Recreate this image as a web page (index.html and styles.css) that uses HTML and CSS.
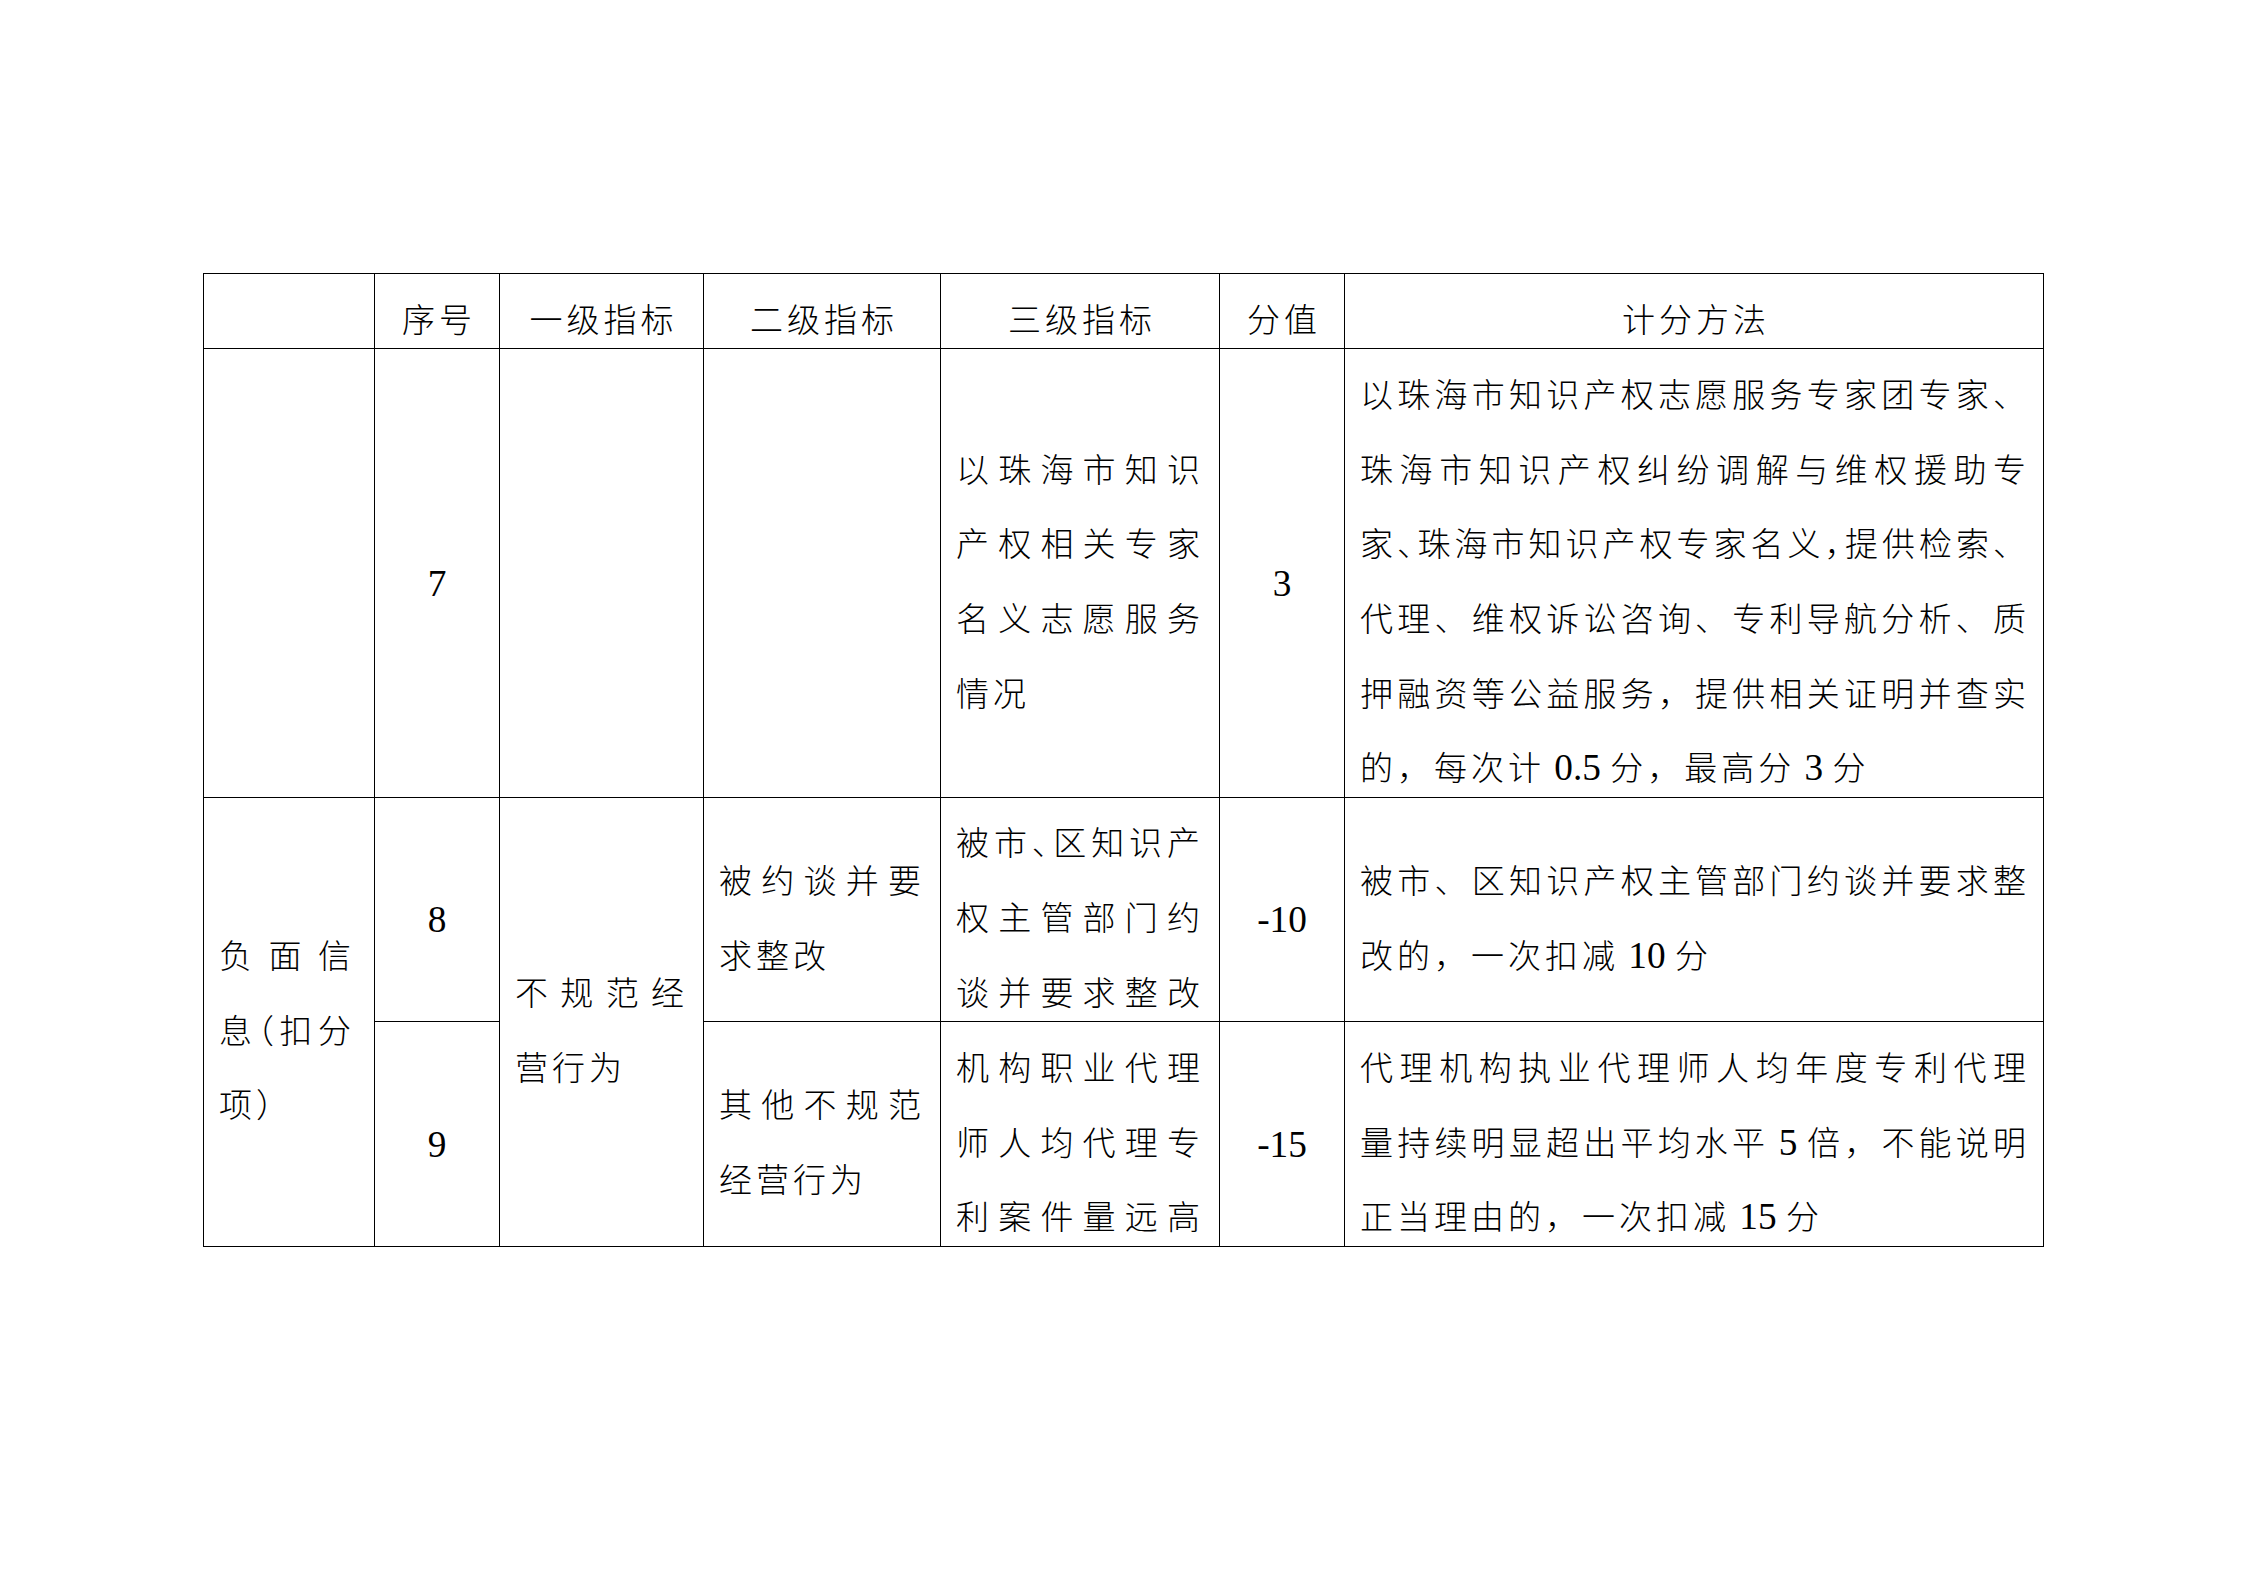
FILE: index.html
```html
<!DOCTYPE html>
<html lang="zh-CN">
<head>
<meta charset="utf-8">
<title>评分表</title>
<link rel="stylesheet" href="styles.css">
</head>
<body>
<div class="sheet">
  <div class="tbl">
    <!-- header -->
    <div class="c"></div>
    <div class="c ctr"><div class="t"><div class="l">序号</div></div></div>
    <div class="c ctr"><div class="t"><div class="l">一级指标</div></div></div>
    <div class="c ctr"><div class="t"><div class="l">二级指标</div></div></div>
    <div class="c ctr"><div class="t"><div class="l">三级指标</div></div></div>
    <div class="c ctr"><div class="t"><div class="l">分值</div></div></div>
    <div class="c ctr"><div class="t"><div class="l">计分方法</div></div></div>

    <!-- row 7 -->
    <div class="c"></div>
    <div class="c ctr num"><div class="t"><div class="l">7</div></div></div>
    <div class="c"></div>
    <div class="c"></div>
    <div class="c txt"><div class="t">
      <div class="l j">以珠海市知识</div>
      <div class="l j">产权相关专家</div>
      <div class="l j">名义志愿服务</div>
      <div class="l">情况</div>
    </div></div>
    <div class="c ctr num"><div class="t"><div class="l">3</div></div></div>
    <div class="c txt wide"><div class="t">
      <div class="l j">以珠海市知识产权志愿服务专家团专家、</div>
      <div class="l j">珠海市知识产权纠纷调解与维权援助专</div>
      <div class="l j">家<span class="cp">、</span>珠海市知识产权专家名义<span class="cp">，</span>提供检索、</div>
      <div class="l j">代理、维权诉讼咨询、专利导航分析、质</div>
      <div class="l j">押融资等公益服务，提供相关证明并查实</div>
      <div class="l">的，每次计<span class="n"> 0.5 </span>分，最高分<span class="n"> 3 </span>分</div>
    </div></div>

    <!-- rows 8 / 9 -->
    <div class="c txt first span2"><div class="t">
      <div class="l j">负面信</div>
      <div class="l j">息<span class="cp">（</span>扣分</div>
      <div class="l">项）</div>
    </div></div>
    <div class="c ctr num"><div class="t"><div class="l">8</div></div></div>
    <div class="c txt span2"><div class="t">
      <div class="l j">不规范经</div>
      <div class="l">营行为</div>
    </div></div>
    <div class="c txt"><div class="t">
      <div class="l j">被约谈并要</div>
      <div class="l">求整改</div>
    </div></div>
    <div class="c txt"><div class="t">
      <div class="l j">被市<span class="cp">、</span>区知识产</div>
      <div class="l j">权主管部门约</div>
      <div class="l j">谈并要求整改</div>
    </div></div>
    <div class="c ctr num"><div class="t"><div class="l">-10</div></div></div>
    <div class="c txt wide"><div class="t">
      <div class="l j">被市、区知识产权主管部门约谈并要求整</div>
      <div class="l">改的，一次扣减<span class="n"> 10 </span>分</div>
    </div></div>

    <div class="c ctr num"><div class="t"><div class="l">9</div></div></div>
    <div class="c txt"><div class="t">
      <div class="l j">其他不规范</div>
      <div class="l">经营行为</div>
    </div></div>
    <div class="c txt"><div class="t">
      <div class="l j">机构职业代理</div>
      <div class="l j">师人均代理专</div>
      <div class="l j">利案件量远高</div>
    </div></div>
    <div class="c ctr num"><div class="t"><div class="l">-15</div></div></div>
    <div class="c txt wide"><div class="t">
      <div class="l j">代理机构执业代理师人均年度专利代理</div>
      <div class="l j">量持续明显超出平均水平<span class="n"> 5 </span>倍，不能说明</div>
      <div class="l">正当理由的，一次扣减<span class="n"> 15 </span>分</div>
    </div></div>
  </div>
</div>
</body>
</html>
```

FILE: styles.css
```css
* {
  box-sizing: border-box;
}

html, body {
  margin: 0;
  padding: 0;
  background: #ffffff;
}

body {
  width: 2245px;
  height: 1587px;
  overflow: hidden;
  color: #000000;
  font-family: "Noto Sans CJK SC", sans-serif;
  font-weight: 300;
  font-size: 33px;
  letter-spacing: 4px;
}

.sheet {
  padding: 273px 0 0 203px;
}

.tbl {
  width: 1841px;
  display: grid;
  grid-template-columns: 171px 125px 204px 237px 279px 125px 699px;
  grid-template-rows: 75px 449px 224px 225px;
  border-top: 1px solid #000;
  border-left: 1px solid #000;
}

.c {
  display: flex;
  flex-direction: column;
  justify-content: center;
  min-width: 0;
  border-right: 1px solid #000;
  border-bottom: 1px solid #000;
}

.span2 {
  grid-row: span 2;
}

.t {
  margin: 7px 0 -7px;
}

.l {
  line-height: 74.7px;
  height: 74.7px;
}

.ctr {
  text-align: center;
  padding-left: 4px;
}

.txt {
  padding: 0 15px;
}

.first {
  padding: 0 19px 0 15px;
}

.wide {
  padding: 0 13px 0 15px;
}

.j {
  text-align: justify;
  text-align-last: justify;
}

.num {
  font-family: "Liberation Serif", serif;
  font-weight: 400;
  font-size: 37.3px;
  letter-spacing: 0;
  padding-left: 0;
}

.num .t {
  margin: 11px 0 -11px;
}

.n {
  font-family: "Liberation Serif", serif;
  font-weight: 400;
  font-size: 37.3px;
  letter-spacing: 0;
}

.cp {
  font-feature-settings: "halt" 1;
}
```
